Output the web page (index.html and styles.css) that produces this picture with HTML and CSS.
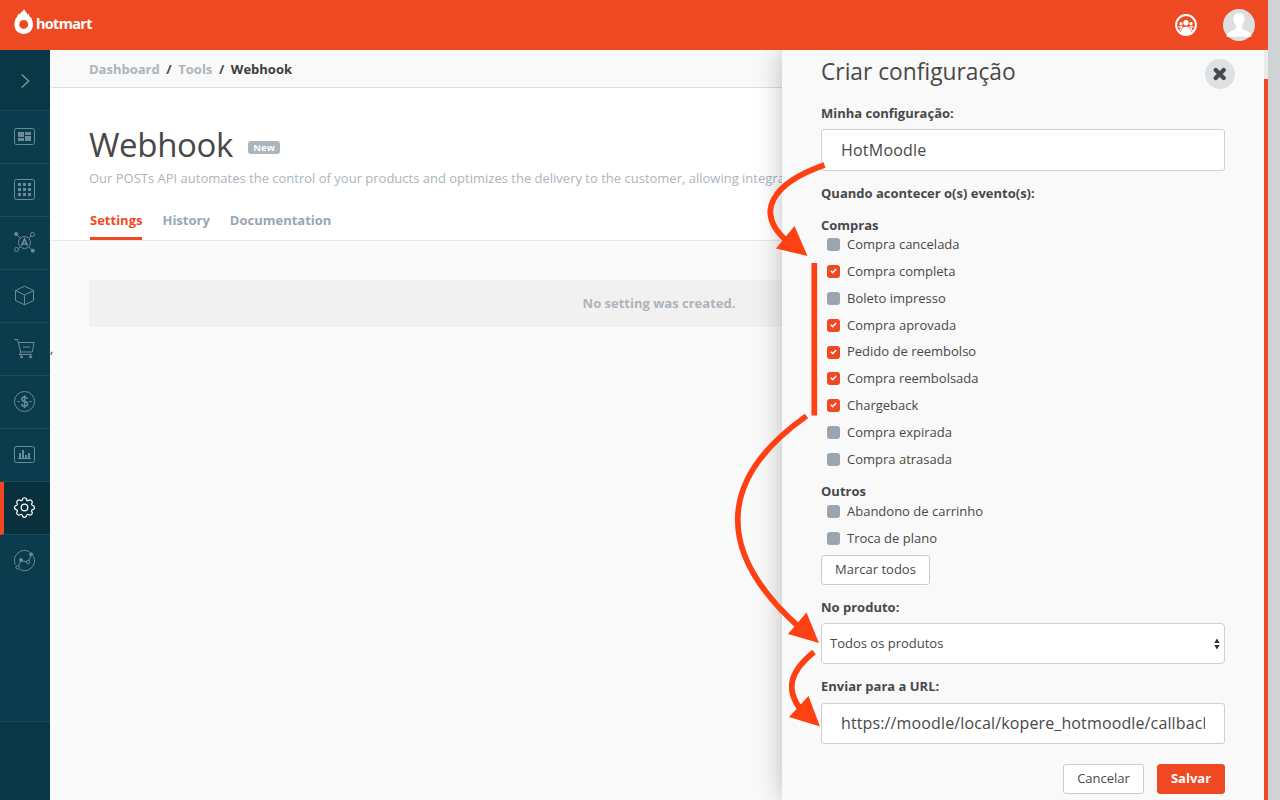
FILE: index.html
```html
<!DOCTYPE html>
<html lang="pt">
<head>
<meta charset="utf-8">
<title>Hotmart - Webhook</title>
<link rel="stylesheet" href="styles.css">
</head>
<body>
<div class="app">
  <header class="topbar">
    <div class="brand">
      <svg width="20" height="26" viewBox="0 0 20 26"><path fill="#fff" fill-rule="evenodd" d="M10.200 0c0 1.800 3 3.500 3.300 5.800l.9-1.300c.8 1.300.8 2.600 1.900 4.300l.6-.8c1 2.300 2 4.300 2 7.500 0 6-4 9.500-9.200 9.500S.5 21.500.5 15.500c0-3 .8-5.200 1.900-7.200l.6.700c.2-2 .7-3 1.900-4.500l.8.900C6.500 3.300 9.200 2.200 10.200 0zM9.700 10.900a4.500 4.500 0 1 0 0 9 4.500 4.500 0 0 0 0-9z"/></svg>
      <span class="brand-name">hotmart</span>
    </div>
    <div class="top-actions">
      <svg width="22" height="22" viewBox="0 0 22 22"><circle cx="11" cy="11" r="9.900" fill="none" stroke="#fff" stroke-width="2"/><g fill="#fff"><circle cx="11" cy="8.700" r="2.700"/><circle cx="6" cy="9.800" r="1.700"/><circle cx="16" cy="9.800" r="1.700"/><path d="M5.900 19c0-4.300 2.300-6.200 5.100-6.200s5.100 1.900 5.100 6.200L11 21z"/></g><path d="M3.500 13.200c1-.6 2.400-.6 3.500-.2-1.300 1-1.900 2.500-2.100 4.300M18.500 13.200c-1-.6-2.400-.6-3.500-.2 1.300 1 1.900 2.500 2.100 4.300" fill="none" stroke="#fff" stroke-width="1.300"/></svg>
      <svg class="avatar" width="32" height="32" viewBox="0 0 32 32"><circle cx="16" cy="16" r="16" fill="#dedede"/><path fill="#fff" d="M16 4c3.800 0 5.700 2.600 5.400 6.300-.2 3-1.200 5.100-2.500 6.400v2.600c1 2.200 7.300 2.300 9 5.700l.6 2.700H3.500L4.100 25c1.700-3.400 8-3.500 9-5.700v-2.600c-1.300-1.300-2.300-3.400-2.500-6.400C10.300 6.600 12.200 4 16 4z"/></svg>
    </div>
  </header>
  <div class="workspace">
    <nav class="sidebar">
      <a class="nav-item nav-toggle"><svg width="22" height="22" viewBox="0 0 22 22"><path d="M7.700 4.500 14.700 11l-7 6.500"/></svg></a>
      <a class="nav-item"><svg width="22" height="22" viewBox="0 0 22 22"><rect x=".5" y="2.500" width="20" height="16" rx="2"/><g class="solid"><path d="M4 6h6v5H4zM11 6h6v3h-6zM4 12h6v3H4zM11 10h6v5h-6z"/></g></svg></a>
      <a class="nav-item"><svg width="22" height="22" viewBox="0 0 22 22"><rect x=".5" y=".5" width="20" height="20" rx="2"/><g class="solid"><path d="M4 4h3v3H4zM9 4h3v3H9zM14 4h3v3h-3zM4 9h3v3H4zM9 9h3v3H9zM14 9h3v3h-3zM4 14h3v3H4zM9 14h3v3H9zM14 14h3v3h-3z"/></g></svg></a>
      <a class="nav-item"><svg width="22" height="22" viewBox="0 0 22 22"><circle cx="10.500" cy="10.500" r="6"/><path d="m7.500 13.700 3-6.700 3 6.700M8.500 11.800h4" stroke-width="1.600"/><path d="m2.500 2.500 3.700 3.700M17 4l-2.200 2.200M4 17l2.200-2.200M18.500 18.500l-3.700-3.700"/><circle cx="18.500" cy="2.500" r="2"/><circle cx="2.500" cy="17.500" r="2"/><g class="solid"><circle cx="2.100" cy="2" r="2"/><circle cx="18.800" cy="18.800" r="2"/></g></svg></a>
      <a class="nav-item"><svg width="22" height="22" viewBox="0 0 22 22"><path d="M10.500 1.200l9 4.300v10l-9 4.300-9-4.300v-10zM1.500 5.500l9 4.500 9-4.500M10.500 10v9.800"/></svg></a>
      <a class="nav-item"><svg width="22" height="22" viewBox="0 0 22 22"><path d="M.2 1.500h3.300l3.200 12.500h11.500L20.200 4.500H4.500M9 9h7M5 16.500h13.300M6.700 14l-1 2.500"/><g class="solid"><circle cx="7.500" cy="18.700" r="1.500"/><circle cx="16.500" cy="18.700" r="1.500"/></g></svg></a>
      <a class="nav-item"><svg width="22" height="22" viewBox="0 0 22 22"><circle cx="10.500" cy="10.500" r="10"/><path d="M13.400 8c-.3-1.300-1.300-2-2.800-2-3.700 0-3.700 3.900 0 4.500 4 .6 4 4.700 0 4.700-1.700 0-2.900-.8-3.100-2.300M10.600 4.300v12.800" stroke-width="1.500"/><path d="M3.400 10.500h2.300M15.400 10.500h2.300"/></svg></a>
      <a class="nav-item"><svg width="22" height="22" viewBox="0 0 22 22"><rect x=".5" y="2.500" width="20" height="16" rx="2"/><path d="M4 14.500h13"/><g class="solid"><path d="M5 9h2v5H5zM8 6h2v8H8zM11 11h2v3h-2zM14 9h2v5h-2z"/></g></svg></a>
      <a class="nav-item active"><svg width="22" height="22" viewBox="0 0 22 22"><circle cx="10.500" cy="10.500" r="3.300"/><path d="M8.300 3C8.600 0 12.400 0 12.700 3c.2.600 1.300.9 1.700.5 2.400-1.500 4.900.9 3.300 3.200-.4.500.1 1.400.7 1.600 2.800.5 2.800 4 0 4.500-.6.200-1.100 1.100-.7 1.600 1.600 2.300-.9 4.700-3.300 3.200-.4-.4-1.500-.1-1.700.5-.3 3-4.100 3-4.400 0-.2-.6-1.300-.9-1.700-.5-2.400 1.500-4.900-.9-3.300-3.200.4-.5-.1-1.400-.7-1.600-2.800-.5-2.800-4 0-4.500.6-.2 1.100-1.100.7-1.600C1.700 4.400 4.200 2 6.600 3.500c.4.400 1.500.1 1.700-.5z"/></svg></a>
      <a class="nav-item last"><svg width="22" height="22" viewBox="0 0 22 22"><path d="M1.400 14.500A10 10 0 0 1 15.300 1.700M19.300 6A10 10 0 0 1 5.500 19.300M4.500 15.500l2.400-4.200M8.300 11l4.700 1M14.800 10.500l2-4.800"/><circle cx="3.600" cy="17.300" r="1.700"/><circle cx="14.100" cy="12" r="1.700"/><g class="solid"><circle cx="7" cy="10" r="2"/><circle cx="17.100" cy="4.200" r="2"/></g></svg></a>
      <div class="nav-foot"></div>
    </nav>
    <main class="content">
      <div class="breadcrumb"><span>Dashboard</span><i>/</i><span>Tools</span><i>/</i><b>Webhook</b></div>
      <section class="page-head">
        <div class="title-row"><h1>Webhook</h1><span class="tag">New</span></div>
        <p class="intro">Our POSTs API automates the control of your products and optimizes the delivery to the customer, allowing integration</p>
        <div class="tabs"><a class="tab selected">Settings</a><a class="tab tab-history">History</a><a class="tab">Documentation</a></div>
      </section>
      <div class="empty">No setting was created.</div>
      <span class="stray">,</span>
    </main>
    <div class="scroll-rail"></div>
    <aside class="panel">
      <div class="panel-head"><h2>Criar configuração</h2>
        <button class="close"><svg width="14" height="14" viewBox="0 0 14 14"><path d="m2.700 3 8 8M10.700 3l-8 8" stroke="#484848" stroke-width="4.200" stroke-linecap="round"/></svg></button></div>
      <div class="label l-name">Minha configuração:</div>
      <div class="field f-name"><span>HotMoodle</span></div>
      <div class="label l-events">Quando acontecer o(s) evento(s):</div>
      <div class="label l-buy">Compras</div>
      <div class="checks c-buy">
        <div class="check"><i class="box"></i><span>Compra cancelada</span></div>
        <div class="check"><i class="box on"><svg width="7" height="6" viewBox="0 0 7 6"><path d="m.8 2.800 1.900 1.800L6.200 1"/></svg></i><span>Compra completa</span></div>
        <div class="check"><i class="box"></i><span>Boleto impresso</span></div>
        <div class="check"><i class="box on"><svg width="7" height="6" viewBox="0 0 7 6"><path d="m.8 2.800 1.900 1.800L6.200 1"/></svg></i><span>Compra aprovada</span></div>
        <div class="check short"><i class="box on"><svg width="7" height="6" viewBox="0 0 7 6"><path d="m.8 2.800 1.900 1.800L6.200 1"/></svg></i><span>Pedido de reembolso</span></div>
        <div class="check"><i class="box on"><svg width="7" height="6" viewBox="0 0 7 6"><path d="m.8 2.800 1.900 1.800L6.200 1"/></svg></i><span>Compra reembolsada</span></div>
        <div class="check"><i class="box on"><svg width="7" height="6" viewBox="0 0 7 6"><path d="m.8 2.800 1.900 1.800L6.200 1"/></svg></i><span>Chargeback</span></div>
        <div class="check"><i class="box"></i><span>Compra expirada</span></div>
        <div class="check"><i class="box"></i><span>Compra atrasada</span></div>
      </div>
      <div class="label l-other">Outros</div>
      <div class="checks c-other">
        <div class="check"><i class="box"></i><span>Abandono de carrinho</span></div>
        <div class="check"><i class="box"></i><span>Troca de plano</span></div>
      </div>
      <button class="btn mark-all">Marcar todos</button>
      <div class="label l-product">No produto:</div>
      <div class="select"><span>Todos os produtos</span><svg width="6" height="12" viewBox="0 0 6 12"><path fill="#333" d="M3 .5 5.700 5H.3zM3 11.500 5.700 7H.3z"/></svg></div>
      <div class="label l-url">Enviar para a URL:</div>
      <div class="field f-url"><span>https://moodle/local/kopere_hotmoodle/callback</span></div>
      <div class="actions"><button class="btn cancel">Cancelar</button><button class="btn save">Salvar</button></div>
    </aside>
  </div>
  <svg class="arrows" width="1280" height="800" viewBox="0 0 1280 800">
    <g fill="none" stroke="#ff4013" stroke-width="5.700">
      <path d="M824.500 165C773 183 753 212 788 242"/>
      <path d="M814.300 263v152.500"/>
      <path d="M806.500 416C718.500 478 713.500 551 800 628"/>
      <path d="M814 652C789 672 785.500 690 801 710"/>
    </g>
    <g fill="#ff4013"><path d="m807.500 256-31.500-7.500 18.500-22.500zM819 643l-31-9 18.500-21.500zM820 726.500l-31-9.500 19.500-21z"/></g>
  </svg>
</div>
</body>
</html>
```
FILE: styles.css
```css
* { box-sizing: border-box; }
body { margin: 0; background: #ced3d6; font-family: "Open Sans", sans-serif; font-size: 13px; color: #484848; }
h1, h2, p { margin: 0; font-weight: 400; }
svg { display: block; flex: none; }
.app { position: relative; width: 1280px; height: 800px; overflow: hidden; display: flex; flex-direction: column; }
.topbar { width: 1268px; height: 50px; flex: none; background: #ef4923; display: flex; justify-content: space-between; align-items: center; padding: 0 13px 0 14px; }
.brand { display: flex; align-items: center; margin-top: -7px; gap: 2px; }
.brand-name { color: #fff; font: 700 14.500px/20px "Open Sans", sans-serif; letter-spacing: -.7px; margin-top: 5px; }
.top-actions { display: flex; align-items: center; gap: 26px; }
.workspace { position: relative; width: 1268px; height: 750px; display: flex; overflow: hidden; }
.sidebar { width: 50px; flex: none; background: #0b3c4d; display: flex; flex-direction: column; }
.nav-item { height: 53px; flex: none; display: flex; align-items: center; padding-left: 14px; border-bottom: 1px solid #1b4a59; }
.nav-item svg { fill: none; stroke: #6b8b95; stroke-width: 1; }
.nav-item .solid { fill: #6b8b95; stroke: none; }
.nav-toggle { height: 61px; padding-top: 2px; background: #0a3745; }
.nav-item.nav-toggle svg { stroke: #7f9aa3; stroke-width: 1.300; }
.nav-item.active { background: #09303d; border-left: 4px solid #ef4923; padding-left: 10px; }
.nav-item.active svg { stroke: #fff; stroke-width: 1.200; }
.nav-item.last { border-bottom-color: transparent; }
.nav-foot { margin-top: auto; height: 79px; background: #0a3745; border-top: 1px solid #1b4a59; }
.content { flex: 1; min-width: 0; background: #fafafa; display: flex; flex-direction: column; }
.breadcrumb { height: 38px; flex: none; background: #f9f9f9; border-bottom: 1px solid #dedede; border-bottom-left-radius: 3px; padding-left: 39px; display: flex; align-items: center; font-weight: 700; color: #acb4bc; }
.breadcrumb i { font-style: normal; color: #484848; width: 18.500px; text-align: center; }
.breadcrumb b { color: #3c3c3c; font-weight: 700; }
.page-head { height: 153px; flex: none; background: #fff; border-bottom: 1px solid #e6e9f0; padding: 35px 0 0 39px; display: flex; flex-direction: column; }
.title-row { height: 44px; display: flex; align-items: center; gap: 15px; }
.title-row h1 { font-size: 33px; line-height: 44px; letter-spacing: -.35px; }
.tag { width: 32px; height: 13px; margin-top: 5px; border-radius: 3px; background: #acb4bc; color: #fff; font-size: 9.500px; font-weight: 700; line-height: 13px; text-align: center; }
.intro { margin-top: 1px; line-height: 20px; color: #acb4bc; white-space: nowrap; }
.tabs { display: flex; margin-top: auto; padding-left: 1px; font-weight: 700; color: #9aa6b0; }
.tab { height: 30px; line-height: 20px; margin-right: 20px; border-bottom: 3px solid transparent; }
.tab.selected { color: #ef4923; border-color: #ef4923; }
.empty { width: 1140px; height: 47px; flex: none; margin: 39px 0 0 39px; border-radius: 3px; background: #f1f1f1; color: #acb4bc; font-weight: 700; line-height: 47px; text-align: center; }
.stray { margin: 12px 0 0 0; line-height: 18px; }
.scroll-rail { width: 4px; flex: none; border-top: 29px solid #ebebeb; background: #ef4923; }
.panel { position: absolute; left: 782px; top: 0; width: 482px; height: 750px; padding: 0 39px; background: #f9f9f9; box-shadow: 0 0 26px rgba(0,0,0,.25); clip-path: inset(0 0 0 -50px); display: flex; flex-direction: column; }
.panel-head { height: 44px; display: flex; justify-content: space-between; }
.panel-head h2 { font-size: 22.750px; line-height: 43px; }
.close { width: 30px; height: 30px; margin: 9px -10px 0 0; padding: 0; border: 0; border-radius: 50%; background: #dde1e4; display: grid; place-items: center; }
.label { height: 20px; flex: none; line-height: 20px; font-weight: 700; }
.l-name { margin-top: 9px; }
.field { flex: none; border: 1px solid #d0d0d0; border-radius: 3px; background: #fff; padding: 0 19px; font-size: 16px; }
.field span { display: block; overflow: hidden; white-space: nowrap; }
.f-name { height: 42px; margin-top: 6px; line-height: 40px; letter-spacing: .22px; }
.l-events { margin-top: 12px; }
.l-buy { margin-top: 12px; }
.checks { display: flex; flex-direction: column; padding-left: 6px; }
.c-buy { margin-top: -4px; }
.check { height: 27px; flex: none; display: flex; align-items: center; gap: 7px; }
.check.short { height: 26px; }
.check.short span { margin-top: -2px; }
.check span { line-height: 20px; margin-top: -1px; }
.box { width: 13px; height: 13px; border-radius: 3px; background: #9ba5af; display: grid; place-items: center; }
.box.on { background: #ef4923; }
.box svg { fill: none; stroke: #fff; stroke-width: 1.500; margin-top: -1px; }
.l-other { margin-top: 8px; }
.c-other { margin-top: -3px; }
.btn { height: 30px; padding: 0 0 2px; border: 1px solid #ccc; border-radius: 3px; background: #fff; font: 400 13px "Open Sans", sans-serif; color: #484848; }
.mark-all { width: 109px; flex: none; margin-top: 3px; }
.l-product { margin-top: 12px; }
.select { height: 41px; flex: none; margin-top: 6px; border: 1px solid #d0d0d0; border-radius: 4px; background: #fff; display: flex; justify-content: space-between; align-items: center; padding: 0 4px 0 8px; }
.select span { margin-top: -2px; }
.l-url { margin-top: 12px; }
.f-url { height: 41px; margin-top: 7px; line-height: 39px; letter-spacing: .13px; }
.actions { display: flex; justify-content: flex-end; gap: 13px; margin-top: 20px; }
.cancel { width: 81px; }
.save { width: 68px; border-color: #ef4923; background: #ef4923; color: #fff; font-weight: 700; }
.arrows { position: absolute; left: 0; top: 0; pointer-events: none; }
```
